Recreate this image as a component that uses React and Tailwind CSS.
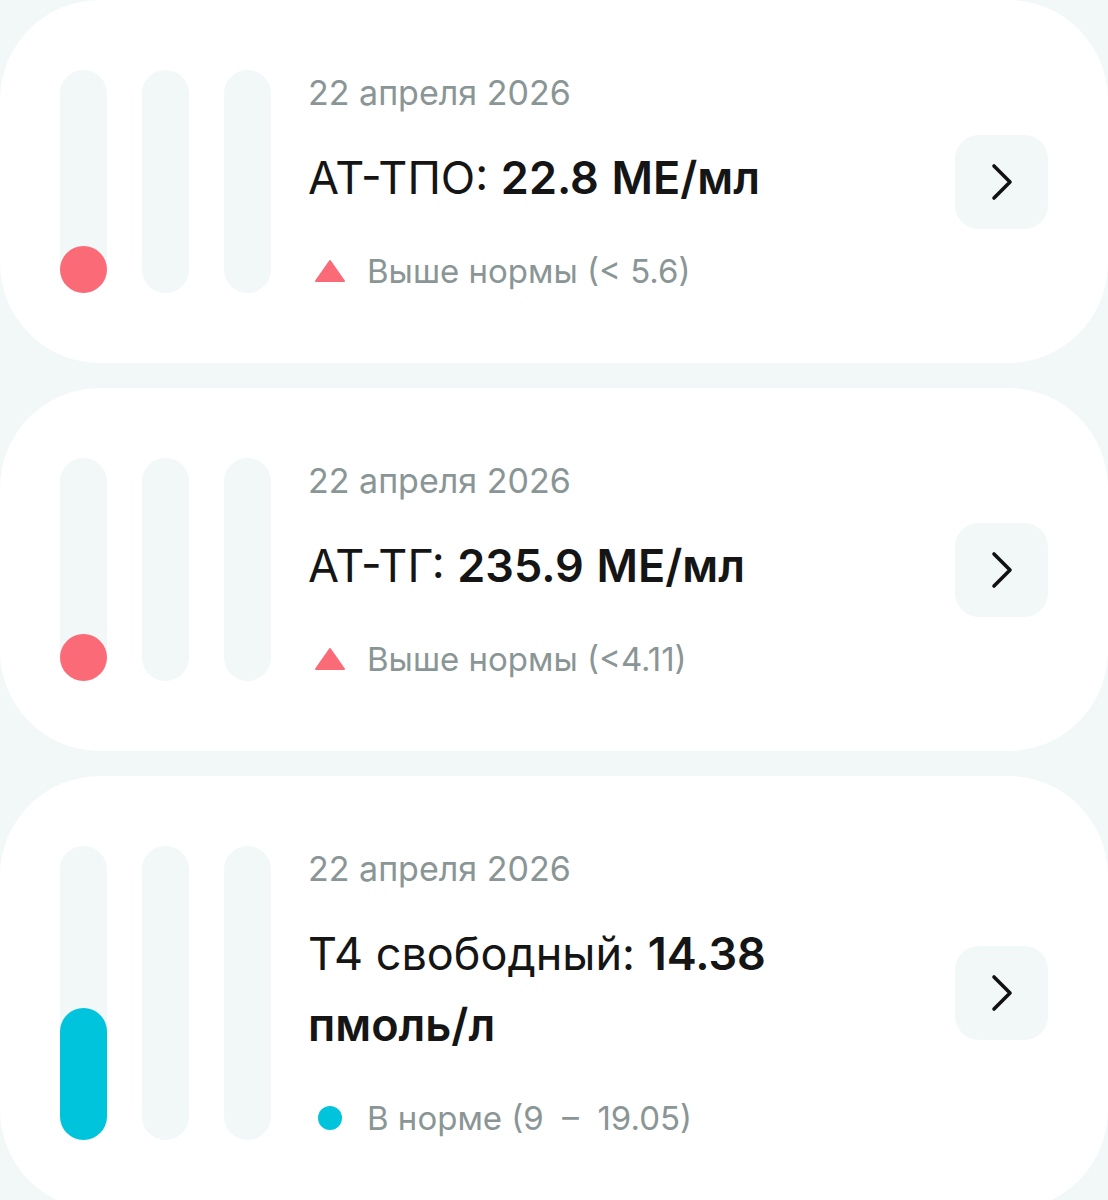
import React from 'react'

const RESULTS = [
  {
    id: 1,
    date: '22 апреля 2026',
    name: 'АТ-ТПО:',
    value: '22.8 МЕ/мл',
    status: 'high',
    note: 'Выше нормы (< 5.6)',
  },
  {
    id: 2,
    date: '22 апреля 2026',
    name: 'АТ-ТГ:',
    value: '235.9 МЕ/мл',
    status: 'high',
    note: 'Выше нормы (<4.11)',
  },
  {
    id: 3,
    date: '22 апреля 2026',
    name: 'Т4 свободный:',
    value: '14.38 пмоль/л',
    status: 'normal',
    note: 'В норме (9 \u00a0–\u00a0 19.05)',
  },
]

function Track({ children }) {
  return (
    <div className="w-[47px] self-stretch rounded-full bg-[#f2f7f8] flex flex-col justify-end">
      {children}
    </div>
  )
}

function Gauge({ status }) {
  return (
    <div className="flex gap-[35px] self-stretch">
      <Track>
        {status === 'high' ? (
          <div className="w-[47px] h-[47px] rounded-full bg-[#fa6b77]" />
        ) : (
          <div className="w-[47px] h-[45%] rounded-full bg-[#00c3dc]" />
        )}
      </Track>
      <Track />
      <Track />
    </div>
  )
}

function StatusMark({ status }) {
  if (status === 'high') {
    return (
      <svg width="30" height="24" viewBox="0 0 30 24" className="shrink-0">
        <path d="M15 2 L29 22 L1 22 Z" fill="#fa6b77" stroke="#fa6b77" strokeWidth="2" strokeLinejoin="round" />
      </svg>
    )
  }
  return (
    <div className="w-[30px] flex justify-center shrink-0">
      <div className="w-[24px] h-[24px] rounded-full bg-[#00c3dc]" />
    </div>
  )
}

function ResultCard({ item }) {
  // split value into words so each wraps as its own box
  const words = item.value.split(' ')
  return (
    <div className="bg-white rounded-[100px] pl-[60px] pr-[60px] py-[70px] flex items-center">
      <Gauge status={item.status} />
      <div className="ml-[37px] w-[600px] flex flex-col">
        <div className="text-[34px] leading-[46px] text-[#8a9595]">{item.date}</div>
        <div className="mt-[26px] text-[45px] leading-[71px] text-[#151515]">
          {item.name}
          {words.map((w, i) => (
            <React.Fragment key={i}>
              {' '}
              <span className="font-semibold">{w}</span>
            </React.Fragment>
          ))}
        </div>
        <div className="mt-[36px] ml-[7px] flex items-center gap-[22px] text-[33px] leading-[44px] text-[#8a9595]">
          <StatusMark status={item.status} />
          <span>{item.note}</span>
        </div>
      </div>
      <div className="ml-auto w-[93px] h-[94px] rounded-[24px] bg-[#f2f7f7] flex items-center justify-center">
        <svg width="24" height="38" viewBox="0 0 24 38" fill="none">
          <path d="M4 3 L20 19 L4 35" stroke="#111" strokeWidth="3.6" strokeLinecap="round" strokeLinejoin="round" />
        </svg>
      </div>
    </div>
  )
}

export default function App() {
  return (
    <div className="min-h-[1200px] bg-[#f2f7f7] flex flex-col gap-[25px] font-['Inter',sans-serif] overflow-hidden">
      {RESULTS.map(item => (
        <ResultCard key={item.id} item={item} />
      ))}
    </div>
  )
}
